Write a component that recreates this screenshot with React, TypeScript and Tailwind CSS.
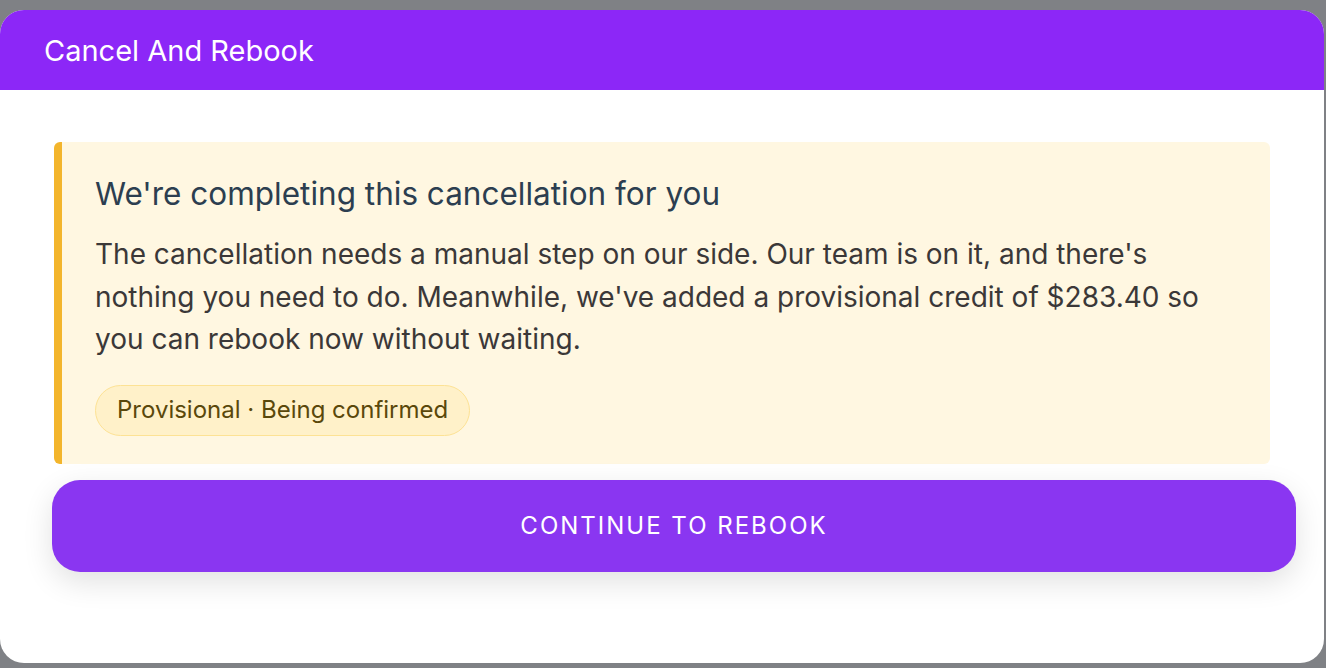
import React from "react";

export default function App() {
  return (
    <div
      className="w-[1326px] h-[668px] bg-[#7f8185] pt-[10px] pr-[2px] pb-[5px] overflow-hidden"
      style={{ fontFamily: "Inter, 'Noto Sans', sans-serif" }}
    >
      <div className="h-[653px] w-[1324px] bg-white rounded-[24px] overflow-hidden flex flex-col">
        <div className="h-[80px] bg-[#8c27f7] flex items-center pl-[44px] shrink-0">
          <h1 className="text-white text-[29px] leading-none">Cancel And Rebook</h1>
        </div>
        <div className="pt-[52px] pl-[52px] pr-[28px] flex flex-col">
          <div className="ml-[2px] w-[1216px] bg-[#fff7e1] rounded-[6px] border-l-[8px] border-[#f3b52c] pl-[33px] pr-[55px] pt-[33px] pb-[28px]">
            <h2 className="text-[31.5px] leading-[38px] text-[#2c3e50] font-normal">
              We're completing this cancellation for you
            </h2>
            <p className="mt-[20px] text-[28px] leading-[42.5px] text-[#3b3838]">
              The cancellation needs a manual step on our side. Our team is on it, and there's nothing you need to do. Meanwhile, we've added a provisional credit of $283.40 so you can rebook now without waiting.
            </p>
            <div className="mt-[24px] inline-flex items-center h-[51px] px-[21px] rounded-full bg-[#fff1c9] border border-[#fde294] text-[#5a480b] text-[24px]">
              Provisional · Being confirmed
            </div>
          </div>
          <button className="mt-[16px] h-[92px] w-[1244px] rounded-[28px] bg-[#8a36f1] text-white text-[24px] tracking-[2px] shadow-[0_10px_30px_rgba(0,0,0,0.12)]">
            CONTINUE TO REBOOK
          </button>
        </div>
      </div>
    </div>
  );
}
